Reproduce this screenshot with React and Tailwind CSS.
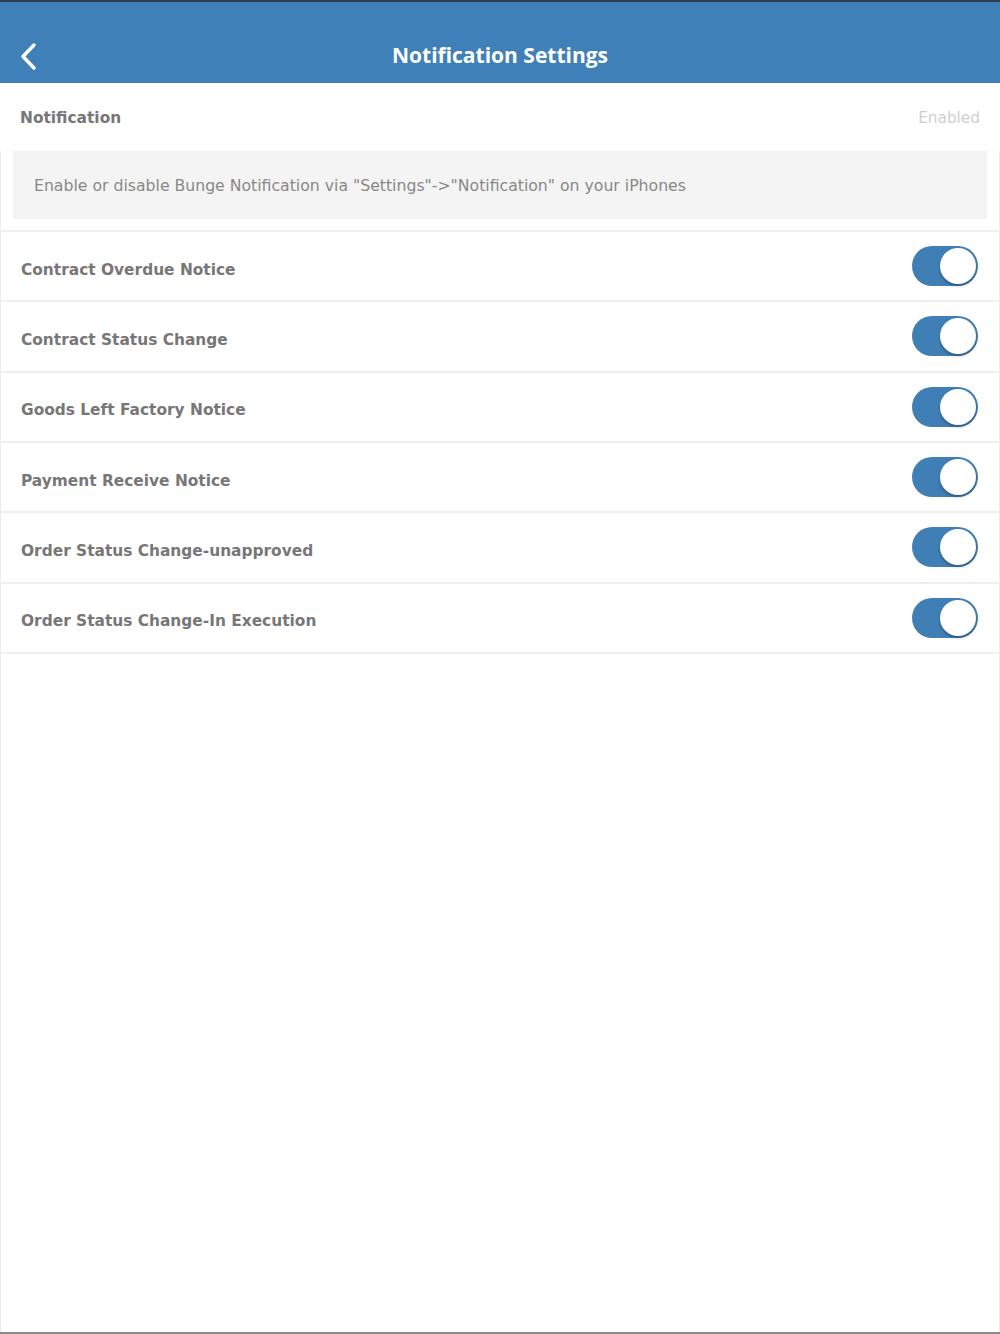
import React, { useState } from 'react';

const items = [
  'Contract Overdue Notice',
  'Contract Status Change',
  'Goods Left Factory Notice',
  'Payment Receive Notice',
  'Order Status Change-unapproved',
  'Order Status Change-In Execution',
];

const Toggle = ({ on, onChange }) => (
  <button
    onClick={onChange}
    className={`relative w-[66px] h-[40px] rounded-full transition-colors ${on ? 'bg-[#3f7fb6]' : 'bg-[#e5e5e5]'}`}
  >
    <span
      className={`absolute top-[2px] h-[36px] w-[36px] rounded-full bg-white shadow-[0_2px_3px_rgba(0,0,0,0.3)] transition-all ${on ? 'left-[28px]' : 'left-[2px]'}`}
    />
  </button>
);

export default function App() {
  const [state, setState] = useState(items.map(() => true));

  return (
    <div className="w-[1000px] h-[1334px] flex flex-col bg-white font-['DejaVu_Sans',sans-serif] border-b-2 border-[#8a8a8a]">
      {/* Header */}
      <div className="h-[83px] bg-[#3f80b8] border-t-2 border-[#2c3e50] flex items-center relative shrink-0">
        <button className="absolute left-[18px] top-[40px] text-white">
          <svg width="22" height="30" viewBox="0 0 22 30" fill="none">
            <path d="M16 3 L5 14.5 L16 26" stroke="white" strokeWidth="3.5" strokeLinecap="round" strokeLinejoin="round" />
          </svg>
        </button>
        <h1 className="w-full text-center text-white text-[21px] font-bold font-['Open_Sans',sans-serif] pt-[26px]">
          Notification Settings
        </h1>
      </div>

      {/* Notification status */}
      <div className="h-[68px] flex items-center justify-between pl-[20px] pr-[20px] pt-[3px] shrink-0">
        <span className="text-[15.4px] font-bold text-[#777]">Notification</span>
        <span className="text-[15.3px] text-[#cfcfcf]">Enabled</span>
      </div>

      <div className="flex-1 flex flex-col border-x border-[#ebebeb]">
        <div className="mx-[12px] h-[68px] bg-[#f4f4f4] flex items-center pl-[21px] pt-[2px] shrink-0">
          <p className="text-[15.7px] text-[#888]">
            Enable or disable Bunge Notification via "Settings"-&gt;"Notification" on your iPhones
          </p>
        </div>
        <div className="h-[13px] border-b-2 border-[#efefef] shrink-0" />

        {items.map((label, i) => (
          <div key={label} className="h-[70.33px] flex items-center justify-between pl-[20px] pr-[21px] border-b-2 border-[#efefef] shrink-0">
            <span className="text-[15.4px] font-bold text-[#777] pt-[8px]">{label}</span>
            <Toggle
              on={state[i]}
              onChange={() => setState(s => s.map((v, j) => (j === i ? !v : v)))}
            />
          </div>
        ))}
        <div className="flex-1" />
      </div>
    </div>
  );
}
